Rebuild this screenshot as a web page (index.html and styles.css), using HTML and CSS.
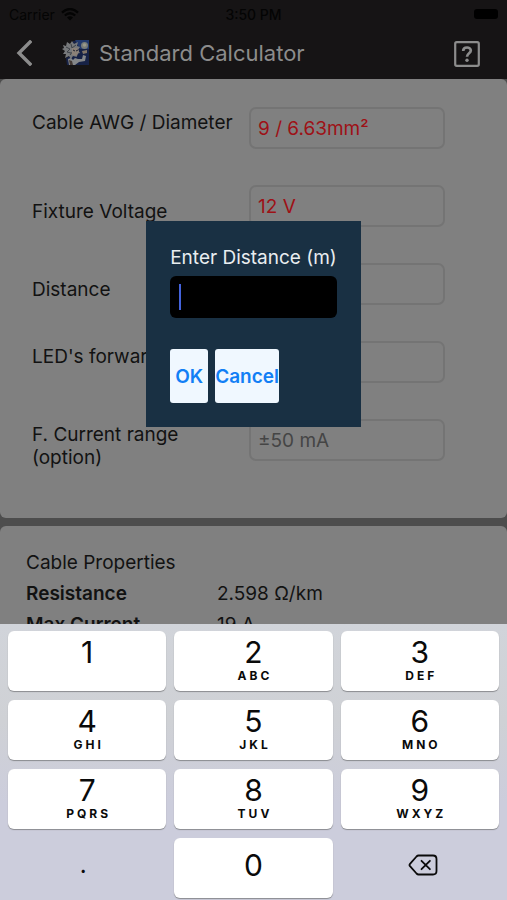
FILE: index.html
```html
<!DOCTYPE html>
<html lang="en">
<head>
<meta charset="utf-8">
<meta name="viewport" content="width=device-width, initial-scale=1">
<title>Standard Calculator</title>
<link rel="stylesheet" href="styles.css">
</head>
<body>
<div class="app">
  <header class="header">
    <div class="status">
      <div class="status-left">
        <span>Carrier</span>
        <svg class="wifi" viewBox="0 0 18 13" aria-hidden="true">
          <path d="M1 4.6Q9-2.6 17 4.6M3.8 7.5Q9 3 14.2 7.5" fill="none" stroke="currentColor" stroke-width="2.3"/>
          <path d="M6 9.6Q9 7 12 9.6L9 12.6Z" fill="currentColor"/>
        </svg>
      </div>
      <span class="clock">3:50 PM</span>
      <div class="status-right"><span class="battery"></span></div>
    </div>
    <div class="titlebar">
      <button class="icon-button back" type="button" aria-label="Back">
        <svg viewBox="0 0 16 26" aria-hidden="true"><path d="M14 2 3 13l11 11" fill="none" stroke="currentColor" stroke-width="3.4" stroke-linecap="square"/></svg>
      </button>
      <svg class="logo" viewBox="0 0 28 26" aria-hidden="true">
        <path d="M11 1h16v24H5l-1-7 6-3z" fill="#172246"/>
        <path d="M13 0h14v9h-9z" fill="#22396c"/>
        <path d="M2 8 1 5l3 1 1-4 3 2 2-3 2 3 4-2-1 4 3 1-2 3 2 3-4 1 1 3-4-1-2 3-2-3-4 2 1-4-3 0 2-3-3-2z" fill="#77797b"/>
        <path d="m4 7 4 2-3 3 4 1M9 4l1 4 4-3M8 15l3-4 3 3" fill="none" stroke="#3e4248" stroke-width="1"/>
        <path d="M10 8h5l2 3-2 5-5-1z" fill="#8b8178"/>
        <path d="m11 10 2 1m1 0 2-1" stroke="#202331" stroke-width="1"/>
        <path d="m6 19 3-1 2 2 2-2 3 1 4 0 1-4 3 1-1 5-6 1-4 3H7z" fill="#858789"/>
        <path d="m7 20 3 1 1 4H8z" fill="#443a35"/>
        <circle cx="22.500" cy="5.500" r="3.500" fill="#777b78"/>
        <circle cx="22.500" cy="5" r="1.800" fill="#99998b"/>
        <path d="m20 11 5-1 0 3-4 1z" fill="#817568"/>
      </svg>
      <h1 class="title">Standard Calculator</h1>
      <button class="icon-button help" type="button" aria-label="Help">
        <svg viewBox="0 0 26 26" aria-hidden="true">
          <rect x="1.200" y="1.200" width="23.600" height="23.600" rx="1.500" fill="none" stroke="currentColor" stroke-width="2.200"/>
          <path d="M9.200 10C9.200 5.400 16.800 5.400 16.800 9.600C16.800 12.400 13 12.200 13 15.800" fill="none" stroke="currentColor" stroke-width="2.700"/>
          <circle cx="13" cy="19.200" r="1.700" fill="currentColor"/>
        </svg>
      </button>
    </div>
  </header>

  <main class="content">
    <form class="panel form">
      <div class="row">
        <label class="label label-tall" for="cable">Cable AWG / Diameter</label>
        <input class="field" id="cable" type="text" value="9 / 6.63mm²">
      </div>
      <div class="row">
        <label class="label" for="voltage">Fixture Voltage</label>
        <input class="field" id="voltage" type="text" value="12 V">
      </div>
      <div class="row">
        <label class="label" for="distance">Distance</label>
        <input class="field" id="distance" type="text">
      </div>
      <div class="row">
        <label class="label label-tall" for="forward">LED's forward</label>
        <input class="field" id="forward" type="text">
      </div>
      <div class="row">
        <label class="label" for="current">F. Current range (option)</label>
        <input class="field" id="current" type="text" placeholder="±50 mA">
      </div>
    </form>
    <section class="panel properties">
      <table class="table">
        <caption>Cable Properties</caption>
        <tbody>
          <tr><th scope="row">Resistance</th><td>2.598 Ω/km</td></tr>
          <tr><th scope="row">Max Current</th><td>19 A</td></tr>
        </tbody>
      </table>
    </section>
  </main>

  <div class="overlay">
    <form class="dialog" role="dialog" aria-labelledby="prompt-label">
      <label class="dialog-label" id="prompt-label" for="prompt">Enter Distance (m)</label>
      <div class="prompt-box"><input class="prompt" id="prompt" type="text" size="1" inputmode="decimal"></div>
      <div class="actions">
        <button class="action action-ok" type="button">OK</button>
        <button class="action" type="button">Cancel</button>
      </div>
    </form>
  </div>

  <div class="keypad">
    <button class="key" type="button">1<small>&nbsp;</small></button>
    <button class="key" type="button">2<small>ABC</small></button>
    <button class="key" type="button">3<small>DEF</small></button>
    <button class="key" type="button">4<small>GHI</small></button>
    <button class="key" type="button">5<small>JKL</small></button>
    <button class="key" type="button">6<small>MNO</small></button>
    <button class="key" type="button">7<small>PQRS</small></button>
    <button class="key" type="button">8<small>TUV</small></button>
    <button class="key" type="button">9<small>WXYZ</small></button>
    <button class="key key-plain key-dot" type="button">.</button>
    <button class="key key-zero" type="button">0</button>
    <button class="key key-plain" type="button" aria-label="Delete">
      <svg class="delete" viewBox="0 0 30 22" aria-hidden="true">
        <path d="M10.500 1.500H25Q28.500 1.500 28.500 5V17Q28.500 20.500 25 20.500H10.500Q9.500 20.500 8.500 19.500L2 12.200Q1 11 2 9.800L8.500 2.500Q9.500 1.500 10.500 1.500Z" fill="none" stroke="currentColor" stroke-width="1.800"/>
        <path d="m13.500 6.800 8.400 8.400m0-8.400-8.400 8.400" stroke="currentColor" stroke-width="1.800" stroke-linecap="round"/>
      </svg>
    </button>
  </div>
</div>
</body>
</html>
```

FILE: styles.css
```css
* { box-sizing: border-box; }

body {
  margin: 0;
  background: #4d4d4d;
  color: #121212;
  font-family: Inter, "Liberation Sans", sans-serif;
  font-size: 19px;
  line-height: 23px;
}

button, input { font: inherit; }

.app {
  display: flex;
  flex-direction: column;
  height: 100vh;
  overflow: hidden;
}

.header {
  flex: none;
  background: #161415;
}

.status {
  display: grid;
  grid-template-columns: 1fr auto 1fr;
  align-items: center;
  height: 28px;
  padding: 0 9px;
  color: #040404;
  font-size: 14px;
}

.status-left { display: flex; align-items: center; gap: 6px; }
.wifi { width: 18px; height: 13px; }
.clock { font-weight: 500; }
.status-right { display: flex; justify-content: flex-end; }
.battery { width: 24px; height: 10px; border-radius: 3px; background: #000; }

.titlebar {
  display: flex;
  align-items: center;
  height: 51px;
  padding: 0 27px 2px 16px;
}

.icon-button {
  display: flex;
  padding: 0;
  border: 0;
  background: none;
  color: #8c8c8c;
}

.back svg { width: 16px; height: 26px; }
.logo { width: 28px; height: 26px; margin: 0 9px 0 30px; }
.title { flex: 1; margin: 0; color: #8c8c8c; font-size: 22px; font-weight: 400; line-height: 28px; }
.help { padding-top: 2px; }
.help svg { width: 26px; height: 26px; }

.content {
  display: flex;
  flex: 1;
  flex-direction: column;
  gap: 8px;
  min-height: 0;
}

.panel { border-radius: 6px; background: #808080; }

.form {
  display: grid;
  grid-auto-rows: 78px;
  padding: 10px 62px 39px 32px;
}

.row {
  display: grid;
  grid-template-columns: 217px 1fr;
  align-items: center;
}

.label { padding: 11px 12px 0 0; }
.label-tall { min-height: 57px; }

.field {
  width: 100%;
  min-width: 0;
  height: 42px;
  padding: 0 7px;
  border: 2px solid #747474;
  border-radius: 7px;
  background: transparent;
  color: #9e1116;
}

.field::placeholder { color: #454545; opacity: 1; }

.properties { flex: 1; padding: 21px 26px; }
.table { width: 100%; border-collapse: collapse; line-height: 31px; }
.table caption { text-align: left; }
.table th { width: 191px; padding: 0; font-weight: 600; text-align: left; }
.table td { padding: 0; }

.overlay {
  position: fixed;
  inset: 24px 0 276px;
  display: flex;
  align-items: center;
  justify-content: center;
}

.dialog {
  display: flex;
  flex-direction: column;
  padding: 24px;
  background: #193043;
}

.dialog-label { padding: 1px 0 7px; color: #e9edf0; }

.prompt-box { position: relative; }

.prompt-box::after {
  content: "";
  position: absolute;
  top: 8px;
  left: 9px;
  width: 2px;
  height: 26px;
  background: #4463dc;
}

.prompt {
  display: block;
  width: 100%;
  min-width: 0;
  height: 42px;
  padding: 0 9px;
  border: 0;
  border-radius: 6px;
  outline: 0;
  background: #000;
  color: #fff;
  caret-color: transparent;
}

.actions { display: flex; gap: 7px; margin-top: 31px; }

.action {
  height: 54px;
  padding: 0;
  border: 0;
  border-radius: 3px;
  background: #f0f8ff;
  color: #127ff5;
  font-weight: 600;
}

.action-ok { padding: 0 5px; }

.keypad {
  position: fixed;
  inset: auto 0 0;
  display: grid;
  grid-template-columns: repeat(3, 1fr);
  grid-auto-rows: 60px;
  gap: 9px 8px;
  padding: 7px 8px 2px;
  background: linear-gradient(#d1d4da, #cfd1d5 35%, #cccddc 65%, #cccddc);
}

.key {
  display: flex;
  flex-direction: column;
  align-items: center;
  justify-content: center;
  padding: 0;
  border: 0;
  border-radius: 6px;
  background: #fff;
  box-shadow: 0 1px 1px #8a8b8f;
  color: #0a0a0a;
  font-size: 30px;
  line-height: 30px;
}

.key small {
  padding-left: 3px;
  font-size: 12px;
  font-weight: 700;
  letter-spacing: 3px;
  line-height: 18px;
}

.key-zero { padding-bottom: 6px; }
.key-plain { padding: 0 0 6px 6px; background: none; box-shadow: none; }
.key-dot { padding: 0 8px 6px 0; font-size: 24px; }
.delete { width: 30px; height: 22px; }
```
